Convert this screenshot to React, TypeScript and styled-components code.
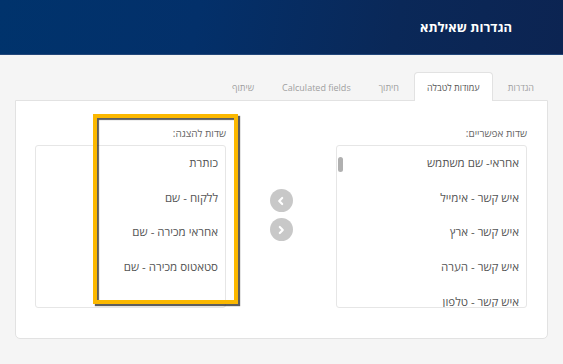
import React from 'react';
import styled, { createGlobalStyle } from 'styled-components';

const GlobalStyle = createGlobalStyle`
  html, body {
    margin: 0;
    padding: 0;
    background: #f5f5f5;
  }
  body {
    font-family: "Open Sans", "DejaVu Sans", sans-serif;
    width: 563px;
    height: 364px;
    overflow: hidden;
  }
`;

const tabs = ['הגדרות', 'עמודות לטבלה', 'חיתוך', 'Calculated fields', 'שיתוף'];
const available = ['אחראי- שם משתמש', 'איש קשר - אימייל', 'איש קשר - ארץ', 'איש קשר - הערה', 'איש קשר - טלפון'];
const selected = ['כותרת', 'ללקוח - שם', 'אחראי מכירה - שם', 'סטאטוס מכירה - שם'];

const App: React.FC = () => {
  return (
    <Page dir="rtl">
      <GlobalStyle />
      <Header>
        <Title>הגדרות שאילתא</Title>
      </Header>
      <Body>
        <TabBar>
          {tabs.map((t, i) => (
            <Tab key={t} active={i === 1}>
              {t}
            </Tab>
          ))}
        </TabBar>
        <Panel>
          <Column>
            <Label>שדות אפשריים:</Label>
            <ListBox>
              {available.map((f) => (
                <Item key={f}>{f}</Item>
              ))}
              <Thumb />
            </ListBox>
          </Column>
          <Middle>
            <RoundButton>
              <Chevron viewBox="0 0 10 10">
                <path d="M6 2.5 L3.5 5 L6 7.5" />
              </Chevron>
            </RoundButton>
            <RoundButton>
              <Chevron viewBox="0 0 10 10">
                <path d="M4 2.5 L6.5 5 L4 7.5" />
              </Chevron>
            </RoundButton>
          </Middle>
          <Column>
            <Label>שדות להצגה:</Label>
            <ListBox>
              {selected.map((f) => (
                <Item key={f}>{f}</Item>
              ))}
            </ListBox>
          </Column>
          <Highlight />
        </Panel>
      </Body>
    </Page>
  );
};

const Page = styled.div`
  width: 563px;
  height: 364px;
  background: #f5f5f5;
`;

const Header = styled.div`
  height: 55px;
  display: flex;
  align-items: center;
  padding: 0 51px 0 0;
  box-sizing: border-box;
  background: linear-gradient(100deg, #00336c 0%, #03306a 35%, #0a2858 70%, #0c2452 100%);
  border-bottom: 1px solid #23477a;
`;

const Title = styled.h1`
  margin: 0;
  color: #ffffff;
  font-size: 13px;
  font-weight: bold;
`;

const Body = styled.div`
  padding: 17px 15px 0;
`;

const TabBar = styled.div`
  display: flex;
  padding-right: 1px;
  height: 28px;
  position: relative;
  z-index: 1;
`;

const Tab = styled.div<{ active?: boolean }>`
  display: flex;
  align-items: center;
  padding: 0 12px;
  margin-left: 2px;
  font-size: 9px;
  color: ${(p) => (p.active ? '#555555' : '#a0a0a0')};
  background: ${(p) => (p.active ? '#ffffff' : 'transparent')};
  border: 1px solid ${(p) => (p.active ? '#e2e2e2' : 'transparent')};
  border-bottom: none;
  border-radius: 4px 4px 0 0;
  height: 29px;
  box-sizing: border-box;
`;

const Panel = styled.div`
  position: relative;
  display: flex;
  background: #ffffff;
  border: 1px solid #e2e2e2;
  border-radius: 0 0 5px 5px;
  padding: 24px 20px 30px 19px;
  height: 239px;
  box-sizing: border-box;
`;

const Column = styled.div`
  width: 191px;
  display: flex;
  flex-direction: column;
`;

const Label = styled.div`
  font-size: 10px;
  color: #666666;
  height: 20px;
  line-height: 16px;
`;

const ListBox = styled.div`
  position: relative;
  height: 163px;
  border: 1px solid #e6e6e6;
  border-radius: 3px;
  overflow: hidden;
  box-sizing: border-box;
`;

const Item = styled.div`
  height: 34.7px;
  line-height: 34px;
  padding-right: 7px;
  font-size: 11.5px;
  color: #555555;
  white-space: nowrap;
`;

const Thumb = styled.div`
  position: absolute;
  left: 1px;
  top: 11px;
  width: 5px;
  height: 15px;
  border-radius: 3px;
  background: #b0b0b0;
`;

const Middle = styled.div`
  width: 110px;
  display: flex;
  flex-direction: column;
  align-items: center;
  gap: 6px;
  padding-top: 64px;
`;

const RoundButton = styled.div`
  width: 23px;
  height: 23px;
  border-radius: 50%;
  background: #c8c8c8;
  display: flex;
  align-items: center;
  justify-content: center;
`;

const Chevron = styled.svg`
  width: 12px;
  height: 12px;
  fill: none;
  stroke: #ffffff;
  stroke-width: 1.8;
  stroke-linecap: round;
  stroke-linejoin: round;
`;

const Highlight = styled.div`
  position: absolute;
  left: 77px;
  top: 13px;
  width: 145px;
  height: 190px;
  box-sizing: border-box;
  border: 4px solid #fbb800;
  box-shadow: 2px 2px 1px rgba(40, 40, 40, 0.75), inset 2px 2px 1px rgba(40, 40, 40, 0.75);
  pointer-events: none;
`;

export default App;
